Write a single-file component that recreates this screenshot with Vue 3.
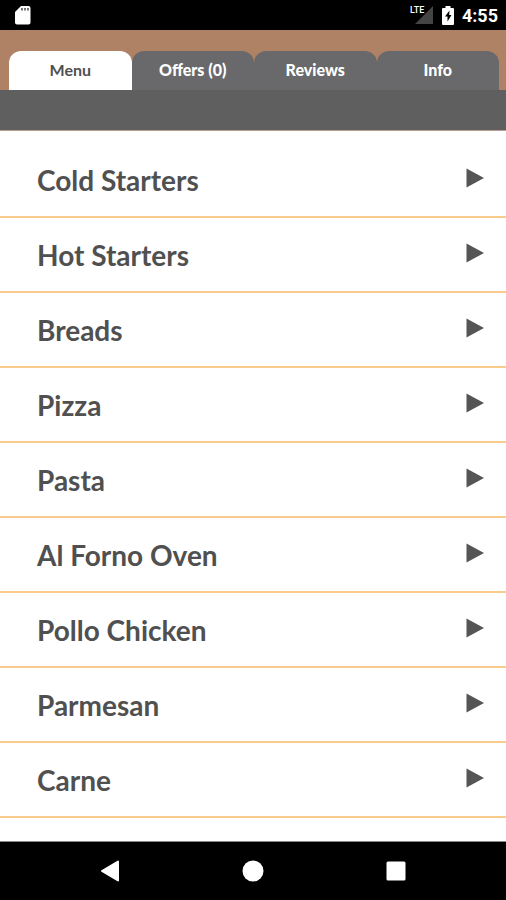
<template>
  <div class="screen">
    <div class="status-bar">
      <svg class="sd-card" viewBox="0 0 16 20" width="16" height="20" aria-hidden="true">
        <path d="M6 1H13.500a2 2 0 0 1 2 2V17.500a2 2 0 0 1-2 2H2a2 2 0 0 1-2-2V7z" fill="#fff" />
        <path d="M7 3v2.500M10 3v2.500M13 3v2.500" stroke="#666" stroke-width="1.800" />
      </svg>
      <div class="status-right">
        <span class="network">
          <svg class="signal" viewBox="0 0 18 18" width="18" height="18" aria-hidden="true">
            <path d="M18 0V18H0z" fill="#444" />
          </svg>
          <span class="lte">LTE</span>
        </span>
        <svg class="battery" viewBox="0 0 12 19" width="12" height="19" aria-hidden="true">
          <path d="M3.500 0h5v2H11a1 1 0 0 1 1 1V18a1 1 0 0 1-1 1H1a1 1 0 0 1-1-1V3a1 1 0 0 1 1-1h2.500z" fill="#fff" />
          <path d="M7.500 4.500L3 10.500H5.500V15.500L9.500 9H7.200z" fill="#000" />
        </svg>
        <span class="clock">4:55</span>
      </div>
    </div>

    <header class="header">
      <nav class="tabs" role="tablist">
        <button
          v-for="tab in tabs"
          :key="tab.id"
          class="tab"
          :class="{ active: tab.id === activeTab }"
          type="button"
          role="tab"
          :aria-selected="tab.id === activeTab"
          @click="activeTab = tab.id"
        >
          {{ tab.label }}
        </button>
      </nav>
    </header>
    <div class="sub-bar"></div>

    <main class="content">
      <ul class="categories">
        <li v-for="name in categories" :key="name">
          <button class="category" type="button">
            <span>{{ name }}</span>
            <svg class="arrow" viewBox="0 0 18 20" width="18" height="20" aria-hidden="true">
              <path d="M0.500 0.500L18 10L0.500 19.500z" fill="#555" />
            </svg>
          </button>
        </li>
      </ul>
    </main>

    <footer class="nav-bar">
      <button class="nav-button" type="button" aria-label="Back">
        <svg viewBox="0 0 22 22" width="22" height="22">
          <path d="M19 1.500V20.500L3 11z" fill="#fff" stroke="#fff" stroke-width="2" stroke-linejoin="round" />
        </svg>
      </button>
      <button class="nav-button" type="button" aria-label="Home">
        <svg viewBox="0 0 22 22" width="22" height="22">
          <circle cx="11" cy="11" r="10.500" fill="#fff" />
        </svg>
      </button>
      <button class="nav-button" type="button" aria-label="Recent apps">
        <svg viewBox="0 0 22 22" width="22" height="22">
          <rect x="1.500" y="1.500" width="19" height="19" rx="1.500" fill="#fff" />
        </svg>
      </button>
    </footer>
  </div>
</template>

<script setup>
import { ref } from 'vue';

const activeTab = ref('menu');

const tabs = [
  { id: 'menu', label: 'Menu' },
  { id: 'offers', label: 'Offers (0)' },
  { id: 'reviews', label: 'Reviews' },
  { id: 'info', label: 'Info' },
];

const categories = [
  'Cold Starters',
  'Hot Starters',
  'Breads',
  'Pizza',
  'Pasta',
  'Al Forno Oven',
  'Pollo Chicken',
  'Parmesan',
  'Carne',
];
</script>

<style>
body {
  margin: 0;
}
</style>

<style scoped>
.screen {
  display: flex;
  flex-direction: column;
  height: 100vh;
  background: #fff;
  color: #505050;
  font-family: Lato, sans-serif;
}

button {
  border: none;
  background: none;
  padding: 0;
  margin: 0;
  font: inherit;
  color: inherit;
  cursor: pointer;
}

svg {
  display: block;
}

/* Status bar */
.status-bar {
  flex: none;
  display: flex;
  align-items: center;
  justify-content: space-between;
  box-sizing: border-box;
  height: 30px;
  padding: 0 8px 0 15px;
  background: #000;
  color: #fff;
  font-family: Roboto, sans-serif;
}
.status-right {
  display: flex;
  align-items: center;
}
.network {
  position: relative;
  padding-left: 5px;
  margin-right: 9px;
}
/* the network label sits over the signal triangle */
.lte {
  position: absolute;
  left: 0;
  top: 0;
  font-size: 9px;
  line-height: 8px;
  font-weight: 500;
}
.clock {
  margin-left: 8px;
  padding-top: 2px;
  font-size: 18px;
  line-height: 28px;
  font-weight: 700;
}

/* Tabs */
.header {
  flex: none;
  padding: 21px 7px 0 9px;
  background: #af8266;
}
.tabs {
  display: flex;
}
.tab {
  flex: 1 1 0;
  height: 39px;
  padding-bottom: 2px;
  border-radius: 12px 12px 0 0;
  background: #69696b;
  color: #fff;
  font-size: 16px;
  line-height: 20px;
  font-weight: 900;
}
.tab.active {
  background: #fff;
  color: #505050;
  font-weight: 700;
}
.sub-bar {
  flex: none;
  height: 40px;
  background: #5f5f5f;
  border-bottom: 1px solid #b79e90;
}

/* Category list */
.content {
  flex: 1 1 auto;
  min-height: 0;
  overflow: hidden;
}
.categories {
  list-style: none;
  margin: 0;
  padding: 12px 0 0;
}
.category {
  display: flex;
  align-items: center;
  justify-content: space-between;
  box-sizing: border-box;
  width: 100%;
  height: 75px;
  padding: 0 22px 0 37px;
  border-bottom: 2px solid #fbcb8e;
  font-size: 28px;
  line-height: 32px;
  font-weight: 700;
  text-align: left;
}
.arrow {
  margin-bottom: 4px;
}

/* Navigation bar */
.nav-bar {
  flex: none;
  display: flex;
  align-items: center;
  justify-content: center;
  gap: 24%;
  height: 58px;
  border-top: 1px solid #8a8a8a;
  background: #000;
}
</style>
